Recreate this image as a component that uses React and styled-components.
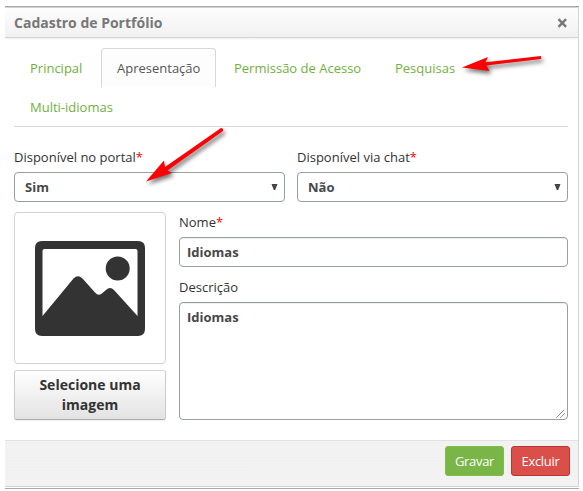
import React from 'react';
import styled, { createGlobalStyle } from 'styled-components';

const Global = createGlobalStyle`
  *, *::before, *::after { box-sizing: border-box; }
  body { margin: 0; background: #fff; font-family: "Open Sans", sans-serif; font-size: 13px; line-height: 20px; color: #333; }
`;

const Page = styled.div`
  position: relative;
  width: 583px;
  height: 491px;
  padding: 6px 0 0 5px;
  overflow: hidden;
`;

const Dialog = styled.section`
  width: 574px;
  height: 483px;
  display: flex;
  flex-direction: column;
  border-top: 1px solid #a9a9a9;
  border-bottom: 1px solid #a9a9a9;
`;

const Frame = styled.div`
  flex: 1;
  display: flex;
  flex-direction: column;
  border: solid #d3d3d3;
  border-width: 1px 1px 1px 0;
  margin-bottom: 1px;
`;

const Header = styled.header`
  height: 30px;
  flex: none;
  display: flex;
  align-items: center;
  justify-content: space-between;
  padding: 0 10px 0 9px;
  background: linear-gradient(#fdfdfd, #f1f1f1);
  border-bottom: 1px solid #d3d3d3;
  box-shadow: 0 2px 2px -1px #eee;
`;

const Title = styled.h1`
  margin: 0;
  font-size: 14px;
  line-height: 20px;
  font-weight: 700;
  color: #777;
`;

const Close = styled.button`
  width: 11px;
  height: 10px;
  padding: 0;
  border: 0;
  background: none;
  display: flex;
`;

const Body = styled.main`
  flex: 1;
  padding: 10px 10px 0 9px;
`;

const Tabs = styled.nav`
  display: flex;
  flex-wrap: wrap;
  height: 79px;
  border-bottom: 1px solid #d8d8d8;
`;

const Tab = styled.a`
  width: ${(p) => p.$width}px;
  height: 39px;
  padding: 9px 0 0 15px;
  border: 1px solid ${(p) => (p.$active ? '#d8d8d8' : 'transparent')};
  border-bottom: 0;
  border-radius: 4px 4px 0 0;
  color: ${(p) => (p.$active ? '#555' : '#72b040')};
  background: ${(p) => (p.$active ? '#fdfdfd' : 'transparent')};
  white-space: nowrap;
  margin-right: 2px;
`;

const SelectRow = styled.div`
  display: grid;
  grid-template-columns: 271px 271px;
  gap: 12px;
  margin-top: 20px;
`;

const Field = styled.div`
  display: flex;
  flex-direction: column;
`;

const Label = styled.label`
  height: 25px;
  line-height: 20px;
`;

const Required = styled.span`
  color: #f00;
`;

const Control = styled.div`
  height: ${(p) => p.$height || 30}px;
  display: flex;
  justify-content: space-between;
  align-items: flex-start;
  padding: ${(p) => (p.$select ? '4px 6px 0 10px' : '4px 2px 0 7px')};
  border: 1px solid #95a09f;
  border-radius: 4px;
  background: #fff;
  box-shadow: ${(p) => (p.$select ? 'none' : 'inset 0 1px 1px #eee')};
  font-weight: 700;
  color: #484848;
`;

const Caret = styled.svg`
  width: 7px;
  height: 6px;
  margin-top: 7px;
`;

const Grip = styled.svg`
  width: 9px;
  height: 9px;
  align-self: flex-end;
  margin-bottom: 1px;
`;

const Details = styled.div`
  display: grid;
  grid-template-columns: 152px 389px;
  gap: 13px;
  margin-top: 10px;
`;

const Column = styled.div`
  display: flex;
  flex-direction: column;
  gap: ${(p) => p.$gap}px;
`;

const Preview = styled.div`
  height: 152px;
  display: flex;
  align-items: center;
  justify-content: center;
  border: 1px solid #d2d2d2;
  border-radius: 4px;
`;

const PickButton = styled.button`
  height: 50px;
  padding: 4px 10px;
  border: 1px solid #ccc;
  border-color: #d9d9d9 #ccc #aaa;
  border-radius: 3px;
  background: linear-gradient(#fff, #e3e3e3);
  box-shadow: 0 1px 2px #eee;
  font: 700 14px/20px "Open Sans", sans-serif;
  color: #333;
`;

const Footer = styled.footer`
  height: 46px;
  flex: none;
  display: flex;
  justify-content: flex-end;
  gap: 7px;
  padding: 5px 8px 0 0;
  border-top: 1px solid #e2e2e2;
  background-color: #f1f1f1;
  background-image: repeating-linear-gradient(90deg, #ffffff1c 0 1px, transparent 1px 4px),
    repeating-linear-gradient(#ffffff1c 0 1px, transparent 1px 3px);
`;

const Action = styled.button`
  width: 59px;
  height: 30px;
  padding: 0;
  border: 1px solid ${(p) => (p.$danger ? '#b93632' : '#80bd43')};
  border-radius: 3px;
  background: ${(p) => (p.$danger ? '#da4f4a' : '#7ab547')};
  font: 13px/20px "Open Sans", sans-serif;
  letter-spacing: -0.3px;
  color: #fff;
`;

const Annotations = styled.svg`
  position: absolute;
  inset: 0;
  pointer-events: none;
  filter: drop-shadow(2px 3px 2px #0008);
`;

function SelectField({ label, value }) {
  return (
    <Field>
      <Label>{label}<Required>*</Required></Label>
      <Control $select>
        {value}
        <Caret viewBox="0 0 7 6"><path d="M.5 0h6L4.200 6H2.800z" fill="#444" /></Caret>
      </Control>
    </Field>
  );
}

export default function App() {
  return (
    <>
      <Global />
      <Page>
        <Dialog>
          <Frame>
            <Header>
              <Title>Cadastro de Portfólio</Title>
              <Close aria-label="Fechar">
                <svg width="11" height="10" viewBox="0 0 11 10"><path d="M1.500 1.200l7.600 7.600m0-7.600l-7.600 7.600" stroke="#777" strokeWidth="2.400" /></svg>
              </Close>
            </Header>
            <Body>
              <Tabs>
                <Tab $width={85}>Principal</Tab>
                <Tab $width={115} $active>Apresentação</Tab>
                <Tab $width={159}>Permissão de Acesso</Tab>
                <Tab $width={91}>Pesquisas</Tab>
                <Tab $width={115}>Multi-idiomas</Tab>
              </Tabs>
              <SelectRow>
                <SelectField label="Disponível no portal" value="Sim" />
                <SelectField label="Disponível via chat" value="Não" />
              </SelectRow>
              <Details>
                <Column $gap={6}>
                  <Preview>
                    <svg width="110" height="95" viewBox="0 0 110 95">
                      <path fillRule="evenodd" fill="#333" d="M7 0H103Q110 0 110 7V88Q110 95 103 95H7Q0 95 0 88V7Q0 0 7 0ZM9.500 8Q7.500 8 7.500 10V75L38.500 37.500Q43 33 47.500 37.500L60 51.500Q64 56 68 51.500L71 49Q75 45 79 49L102.500 75V10Q102.500 8 100.500 8Z" />
                      <circle cx="82.700" cy="27.500" r="12" fill="#333" />
                    </svg>
                  </Preview>
                  <PickButton>Selecione uma imagem</PickButton>
                </Column>
                <Column $gap={10}>
                  <Field>
                    <Label>Nome<Required>*</Required></Label>
                    <Control>Idiomas</Control>
                  </Field>
                  <Field>
                    <Label>Descrição</Label>
                    <Control $height={118}>
                      Idiomas
                      <Grip viewBox="0 0 9 9"><path d="M.5 8.500l8-8M4.500 8.500l4-4" stroke="#555" strokeDasharray="1.200 .4" /></Grip>
                    </Control>
                  </Field>
                </Column>
              </Details>
            </Body>
            <Footer>
              <Action>Gravar</Action>
              <Action $danger>Excluir</Action>
            </Footer>
          </Frame>
        </Dialog>
        <Annotations width="583" height="491" viewBox="0 0 583 491">
          <g fill="#f00">
            <path d="M462 67.500L488 57L485.500 62.300L541 56V59L486.500 65.500L489.500 71Z" />
            <path d="M146 181.500L164 160.500L165 167L221 128Q223.500 128 223 131L167.500 170.500L172 173Z" />
          </g>
        </Annotations>
      </Page>
    </>
  );
}
